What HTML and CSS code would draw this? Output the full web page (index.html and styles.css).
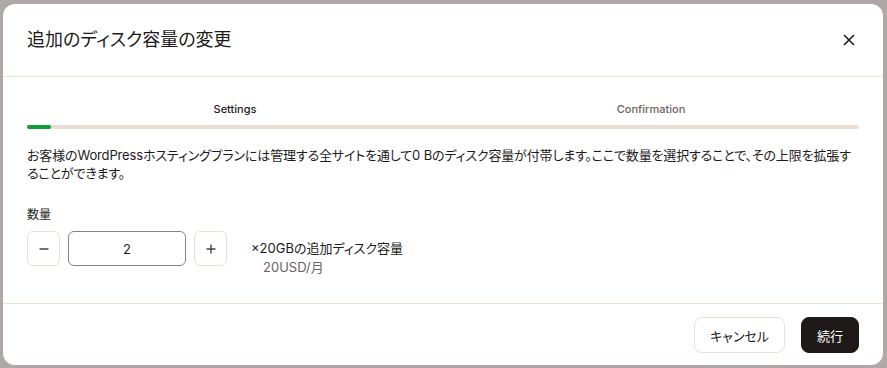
FILE: index.html
```html
<!DOCTYPE html>
<html lang="ja">

<head>
    <meta charset="UTF-8">
    <meta name="viewport" content="width=device-width, initial-scale=1.0">
    <title>追加のディスク容量の変更</title>
    <link rel="stylesheet" href="styles.css">
</head>

<body>
    <div class="modal">
        <div class="modal-head">
            <h1 class="title">追加のディスク容量の変更</h1>
            <button class="close" aria-label="閉じる">
                <svg width="12" height="12" viewBox="0 0 12 12">
                    <path d="M1.5 1.5 L10.5 10.5 M10.5 1.5 L1.5 10.5" stroke="#1e1a1a" stroke-width="1.6" fill="none" stroke-linecap="round" />
                </svg>
            </button>
        </div>

        <div class="modal-body">
            <div class="steps">
                <span class="step active">Settings</span>
                <span class="step">Confirmation</span>
            </div>
            <div class="progress"><div class="progress-fill"></div></div>

            <p class="desc">お客様のWordPressホスティングプランには管理する全サイトを通して0 Bのディスク容量が付帯します。ここで数量を選択することで、その上限を拡張することができます。</p>

            <label class="qty-label">数量</label>
            <div class="qty-row">
                <div class="stepper">
                    <button class="step-btn">
                        <svg width="12" height="12" viewBox="0 0 12 12"><path d="M1.5 6 H10.5" stroke="#4a4343" stroke-width="1.4" /></svg>
                    </button>
                    <input class="qty-input" type="text" value="2">
                    <button class="step-btn">
                        <svg width="12" height="12" viewBox="0 0 12 12"><path d="M1.5 6 H10.5 M6 1.5 V10.5" stroke="#4a4343" stroke-width="1.4" /></svg>
                    </button>
                </div>
                <div class="qty-info">
                    <div class="qty-unit">×20GBの追加ディスク容量</div>
                    <div class="qty-price">20USD/月</div>
                </div>
            </div>
        </div>

        <div class="modal-foot">
            <button class="btn btn-light">キャンセル</button>
            <button class="btn btn-dark">続行</button>
        </div>
    </div>
</body>

</html>
```

FILE: styles.css
```css
* {
    margin: 0;
    padding: 0;
    box-sizing: border-box;
}

body {
    background: #b0a8a8;
    font-family: "Inter", "Noto Sans CJK JP", sans-serif;
    font-feature-settings: "palt";
    color: #1e1a1a;
}

.modal {
    width: 880px;
    margin: 4px 0 0 3px;
    background: #fff;
    border-radius: 12px;
    overflow: hidden;
}

/* ヘッダー */
.modal-head {
    height: 73px;
    padding: 0 24px;
    display: flex;
    align-items: center;
    justify-content: space-between;
    border-bottom: 1px solid #ebe0d6;
}

.title {
    font-size: 18px;
    font-weight: 400;
    line-height: 24px;
    padding-bottom: 1px;
}

.close {
    width: 20px;
    height: 20px;
    border: none;
    background: none;
    display: flex;
    align-items: center;
    justify-content: center;
    margin-bottom: 1px;
}

/* 本文 */
.modal-body {
    padding: 24px 24px 26px;
    border-bottom: 1px solid #ebe0d6;
}

.steps {
    display: flex;
}

.step {
    flex: 1;
    text-align: center;
    font-size: 11px;
    line-height: 16px;
    font-weight: 500;
    color: #6b6363;
}

.step.active {
    color: #1e1a1a;
}

.progress {
    margin-top: 8px;
    height: 4px;
    border-radius: 2px;
    background: #e8dcd3;
}

.progress-fill {
    width: 24px;
    height: 4px;
    border-radius: 2px;
    background: #0a9e3a;
}

.desc {
    margin-top: 17px;
    font-size: 13px;
    line-height: 18px;
    letter-spacing: -0.15px;
}

.qty-label {
    display: block;
    margin-top: 24px;
    font-size: 12px;
    line-height: 17px;
}

.qty-row {
    margin-top: 8px;
    display: flex;
    align-items: flex-start;
    gap: 24px;
}

.stepper {
    display: flex;
    gap: 8px;
}

.step-btn {
    width: 33px;
    height: 35px;
    border: 1px solid #ebe0d6;
    border-radius: 6px;
    background: #fff;
    display: flex;
    align-items: center;
    justify-content: center;
}

.qty-input {
    width: 118px;
    height: 35px;
    border: 1px solid #8c8080;
    border-radius: 6px;
    text-align: center;
    font-family: "Inter", sans-serif;
    font-size: 13px;
    color: #1e1a1a;
    outline: none;
}

.qty-info {
    margin-top: 8px;
    font-size: 13px;
    line-height: 19px;
}

.qty-price {
    padding-left: 12px;
    color: #6b6363;
}

/* フッター */
.modal-foot {
    padding: 13px 24px 12px;
    display: flex;
    justify-content: flex-end;
    gap: 16px;
}

.btn {
    height: 36px;
    padding: 0 15px;
    border-radius: 8px;
    font-family: "Inter", "Noto Sans CJK JP", sans-serif;
    font-feature-settings: "palt";
    font-size: 13px;
    font-weight: 400;
}

.btn-light {
    background: #fff;
    border: 1px solid #ebe0d6;
    color: #1e1a1a;
}

.btn-dark {
    background: #1e1a1a;
    border: 1px solid #1e1a1a;
    color: #fff;
}
```
